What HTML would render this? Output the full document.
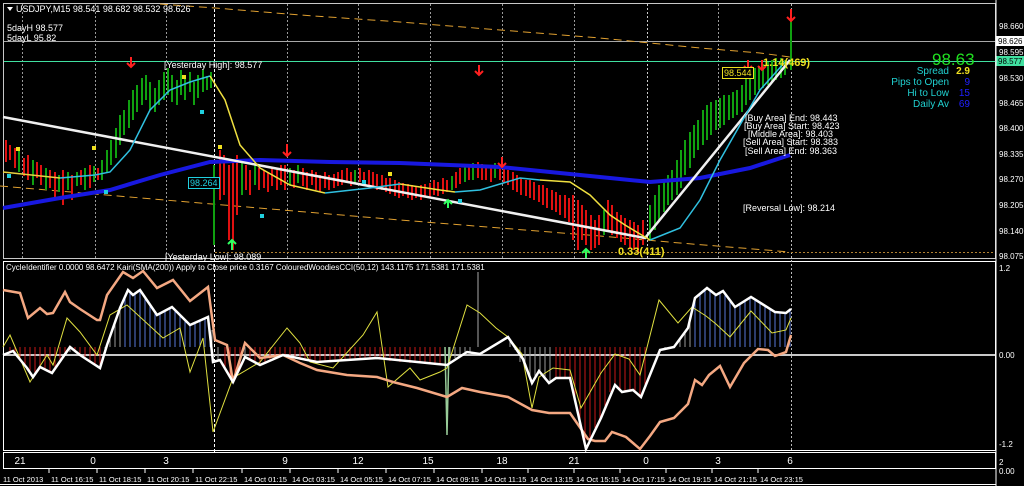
<!DOCTYPE html>
<html><head><meta charset="utf-8"><style>
html,body{margin:0;padding:0;background:#000;width:1024px;height:486px;overflow:hidden}
svg{display:block;font-family:"Liberation Sans",sans-serif}
</style></head><body>
<svg width="1024" height="486" viewBox="0 0 1024 486" xmlns="http://www.w3.org/2000/svg">
<rect width="1024" height="486" fill="#000"/>
<rect x="3.5" y="3.5" width="992" height="255" fill="none" stroke="#c8c8c8"/>
<rect x="3.5" y="261.5" width="992" height="189" fill="none" stroke="#fff"/>
<rect x="3.5" y="452.5" width="992" height="16" fill="none" stroke="#fff"/>
<line x1="0" y1="484.5" x2="996" y2="484.5" stroke="#fff"/>
<g stroke="#9a9a9a" stroke-dasharray="2,2" stroke-width="1">
<line x1="22.5" y1="4" x2="22.5" y2="258"/><line x1="95.5" y1="4" x2="95.5" y2="258"/><line x1="166.5" y1="4" x2="166.5" y2="258"/>
<line x1="287.5" y1="4" x2="287.5" y2="258"/><line x1="358.5" y1="4" x2="358.5" y2="258"/><line x1="430.5" y1="4" x2="430.5" y2="258"/>
<line x1="502.5" y1="4" x2="502.5" y2="258"/><line x1="574.5" y1="4" x2="574.5" y2="258"/><line x1="718.5" y1="4" x2="718.5" y2="258"/>
</g>
<line x1="214.5" y1="4" x2="214.5" y2="452" stroke="#fff" stroke-dasharray="3,2"/>
<line x1="647.5" y1="4" x2="647.5" y2="258" stroke="#ccc" stroke-dasharray="2,2"/>
<line x1="791.5" y1="4" x2="791.5" y2="452" stroke="#bbb" stroke-dasharray="2,2"/>
<line x1="4" y1="41.5" x2="995" y2="41.5" stroke="#a8a8a8"/>
<line x1="4" y1="61.5" x2="1024" y2="61.5" stroke="#40e0a0"/>
<polyline points="160,4 215,8 300,15 400,22 500,30 600,38 700,48 760,53 790,57" fill="none" stroke="#e0a030" stroke-dasharray="8,5"/>
<polyline points="0,186 200,203 400,220 600,236 680,243 790,252" fill="none" stroke="#e0a030" stroke-dasharray="8,5"/>
<line x1="215" y1="252.5" x2="995" y2="252.5" stroke="#b08030" stroke-dasharray="2,2"/>
<!-- candles -->
<path fill="none" stroke="#e01010" stroke-width="2" d="M6,140V162M10,145V160M15,148V168M24,158V176M28,155V180M37,162V178M41,165V185M50,170V188M55,172V200M63,170V205M72,175V200M81,170V185M90,165V188M98,168V180
M220,150V200M224,155V195M229,165V240M233,160V250M237,155V215M246,165V190M250,170V195M259,168V190M264,170V188M268,172V192M272,168V186M277,170V190M281,165V185M285,165V190M294,170V188M303,168V186M307,172V190M312,170V185M316,172V190M320,175V192M325,172V188M329,175V190M334,174V188M338,172V186M342,170V185M347,168V182M351,172V186M360,168V182M364,172V186M369,170V185M373,172V188M377,174V190M382,175V190M386,178V192M390,178V194M395,180V196M399,182V198M403,183V196M408,184V198M412,185V200M416,186V198M421,185V200M425,184V196M430,183V198M434,180V195M438,182V196M443,178V194M447,180V192M456,172V188M460,168V184M469,165V180M478,162V178M482,164V180M486,165V180M491,166V182M500,165V180M504,168V183M508,170V185M513,172V190M517,175V192M521,178V195M526,180V196M530,180V198M534,182V200M539,185V202M543,185V205M547,188V208M552,190V210M556,192V212M560,195V215M565,195V218M569,198V222M573,195V240M578,200V250M582,205V240M586,210V245M591,215V250M595,220V248M599,215V245M608,200V230M612,205V235M617,212V238M621,215V242M625,218V245M630,220V248M634,222V250M638,225V252M643,220V245"/>
<path fill="none" stroke="#10a010" stroke-width="2" d="M19,150V172M33,160V185M46,168V190M59,175V192M68,172V190M77,172V186M85,168V190M94,166V182
M102,160V180M107,150V172M111,140V165M116,128V158M120,115V145M124,110V135M129,100V128M133,90V120M137,85V112M142,78V105M146,75V100M150,82V110M155,88V112M159,80V105M164,72V100M168,68V95M172,75V102M177,80V105M181,70V95M185,78V100M190,72V92M194,82V105M198,75V98M203,70V92M207,76V90M211,72V88M214,165V245
M242,160V195M255,165V185M290,168V185M298,165V183M355,170V183M452,176V190M465,165V182M473,163V180M495,163V178M604,210V235
M650,205V240M655,195V230M659,185V220M664,180V212M668,175V205M672,170V200M677,160V195M681,150V188M685,140V175M690,132V168M694,125V158M698,120V150M703,110V145M707,105V140M711,102V135M716,100V130M720,98V128M724,95V125M729,95V120M733,92V118M737,90V115M742,85V112M746,75V105M750,72V100M755,68V95M759,66V90M763,64V88M768,62V85M772,60V82M776,58V80M781,58V78M785,60V75M791,10V70"/>
<polyline points="3,208 60,198 110,190 160,175 210,162 260,160 330,162 400,163 500,167 560,173 600,177 650,182 700,178 750,168 790,155" fill="none" stroke="#1818e0" stroke-width="4"/>
<polyline points="3,117 645,238 790,60" fill="none" stroke="#f0f0f0" stroke-width="2.5"/>
<polyline points="3,172 60,178" fill="none" stroke="#e8d040" stroke-width="1.5"/>
<polyline points="60,178 95,175 110,172 130,150 150,110 170,90 190,82 210,76" fill="none" stroke="#30c0e0" stroke-width="1.5"/>
<polyline points="210,76 225,100 240,145 260,168 290,185 325,193" fill="none" stroke="#f0e040" stroke-width="1.5"/>
<polyline points="325,193 370,188 400,184" fill="none" stroke="#30c0e0" stroke-width="1.5"/>
<polyline points="400,184 440,190 455,192" fill="none" stroke="#f0e040" stroke-width="1.5"/>
<polyline points="455,192 480,190 520,178 540,180" fill="none" stroke="#30c0e0" stroke-width="1.5"/>
<polyline points="540,180 570,182 590,195 610,215 625,225 650,240" fill="none" stroke="#f0e040" stroke-width="1.5"/>
<polyline points="650,240 680,228 700,200 720,160 760,90 785,62" fill="none" stroke="#30c0e0" stroke-width="1.5"/>
<g fill="#f0e020"><rect x="16" y="147" width="4" height="4"/><rect x="92" y="146" width="4" height="4"/><rect x="182" y="75" width="4" height="4"/><rect x="218" y="145" width="4" height="4"/><rect x="388" y="172" width="4" height="4"/></g>
<g fill="#20d0e0"><rect x="7" y="174" width="4" height="4"/><rect x="200" y="110" width="4" height="4"/><rect x="260" y="214" width="4" height="4"/><rect x="362" y="180" width="4" height="4"/><rect x="458" y="199" width="4" height="4"/><rect x="104" y="190" width="4" height="4"/></g>
<g fill="none" stroke="#ff2020" stroke-width="2">
<path d="M131,57v9M127,63l4,4l4,-4"/><path d="M479,65v9M475,71l4,4l4,-4"/><path d="M287,144v12M283,152l4,4l4,-4"/><path d="M502,157v10M498,163l4,4l4,-4"/><path d="M748,60v9M744,66l4,4l4,-4"/><path d="M762,60v9M758,66l4,4l4,-4"/><path d="M791,9v12M787,17l4,4l4,-4"/>
</g>
<g fill="none" stroke="#30ff60" stroke-width="2">
<path d="M232,250v-10M228,244l4,-4l4,4"/><path d="M586,258v-9M582,253l4,-4l4,4"/><path d="M448,208v-8M444,204l4,-4l4,4"/>
</g>
<g font-size="9" fill="#fff">
<path d="M7,7 L13,7 L10,11Z" fill="#fff"/>
<text x="16" y="12">USDJPY,M15  98.541 98.682 98.532 98.626</text>
<text x="7" y="31">5dayH 98.577</text>
<text x="7" y="41">5dayL 95.82</text>
<text x="164" y="68">[Yesterday High]: 98.577</text>
<text x="165" y="260">[Yesterday Low]: 98.089</text>
<text x="745" y="121">[Buy Area] End: 98.443</text>
<text x="744" y="129">[Buy Area] Start: 98.423</text>
<text x="748" y="137">[Middle Area]: 98.403</text>
<text x="743" y="145">[Sell Area] Start: 98.383</text>
<text x="745" y="154">[Sell Area] End: 98.363</text>
<text x="743" y="211">[Reversal Low]: 98.214</text>
</g>
<rect x="188.5" y="177.5" width="31" height="11" fill="#000" stroke="#20d0e0"/>
<text x="190" y="186" font-size="9" fill="#20d0e0">98.264</text>
<rect x="722.5" y="67.5" width="31" height="11" fill="#000" stroke="#f0e020"/>
<text x="724" y="76" font-size="9" fill="#f0e020">98.544</text>
<text x="763" y="66" font-size="11" font-weight="bold" fill="#f0e020">1.14(469)</text>
<text x="618" y="255" font-size="11" font-weight="bold" fill="#f0e020">0.33(411)</text>
<text x="932" y="65" font-size="17" fill="#20e020">98.63</text>
<g font-size="10" text-anchor="end">
<text x="949" y="74" fill="#20d0d0">Spread</text><text x="970" y="74" fill="#f0e020" font-weight="bold">2.9</text>
<text x="949" y="85" fill="#20d0d0">Pips to Open</text><text x="970" y="85" fill="#2020ff">9</text>
<text x="949" y="96" fill="#20d0d0">Hi to Low</text><text x="970" y="96" fill="#2020ff">15</text>
<text x="949" y="107" fill="#20d0d0">Daily Av</text><text x="970" y="107" fill="#2020ff">69</text>
</g>
<g font-size="8" fill="#fff">
<text x="999" y="29">98.660</text><text x="999" y="55">98.595</text><text x="999" y="81">98.530</text><text x="999" y="106">98.465</text><text x="999" y="131">98.400</text><text x="999" y="157">98.335</text><text x="999" y="182">98.270</text><text x="999" y="208">98.205</text><text x="999" y="234">98.140</text><text x="999" y="259">98.075</text>
<text x="999" y="271">1.2</text><text x="999" y="358">0.00</text><text x="999" y="447">-1.2</text>
<text x="999" y="465">2</text><text x="999" y="474">0.00</text>
</g>
<rect x="996" y="36" width="28" height="10" fill="#fff"/><text x="998" y="44" font-size="8" fill="#000">98.626</text>
<rect x="996" y="56" width="28" height="10" fill="#40e0a0"/><text x="998" y="64" font-size="8" fill="#000">98.577</text>
<line x1="996" y1="0" x2="996" y2="486" stroke="#fff"/>
<!-- indicator -->
<text x="6" y="270" font-size="8" fill="#fff">CycleIdentifier 0.0000 98.6472  Kairi(SMA(200)) Apply to Close price 0.3167  ColouredWoodiesCCI(50,12) 143.1175 171.5381 171.5381</text>
<line x1="4" y1="355" x2="995" y2="355" stroke="#c8c8c8" stroke-width="2"/>
<path fill="none" stroke="#c81818" stroke-width="1" d="M10,347V352M15,347V354M20,347V360M25,347V366M30,347V372M35,347V374M40,347V367M45,347V370M50,347V372M55,347V369M60,347V362M65,347V354M75,347V351M80,347V355M85,347V358M90,347V362M95,347V365M100,347V368
M225,347V367M230,347V378M235,347V378M240,347V367M250,347V360M255,347V363M260,347V365M265,347V362M270,347V360M275,347V358M280,347V357M285,347V356M290,347V358M295,347V359M300,347V360M305,347V361M310,347V362M315,347V362M320,347V362M325,347V361M330,347V361M335,347V361M340,347V360M345,347V360M350,347V360M355,347V359M360,347V359M365,347V359M370,347V358M375,347V358M380,347V359M385,347V360M390,347V361M395,347V361M400,347V362M405,347V362M410,347V363M415,347V363M420,347V363M425,347V364M430,347V364M435,347V364M440,347V365M445,347V365
M556,347V378M560,347V378M565,347V378M570,347V378M575,347V400M580,347V425M585,347V447M590,347V439M595,347V428M600,347V418M605,347V407M610,347V392M615,347V385M620,347V391M625,347V391M630,347V390M635,347V393M640,347V397M645,347V385"/>
<path fill="none" stroke="#9a9a9a" stroke-width="1" d="M70,347V352M105,347V350M110,347V337M115,347V322M120,347V308M212,347V330M218,347V360M245,347V357M450,347V362M455,347V358M460,347V354M465,347V352M470,347V352M520,347V362M525,347V362M530,347V378M535,347V378M540,347V373M545,347V380M550,347V382M510,347V340M515,347V350M665,347V349M670,347V348M675,347V346M680,347V340M685,347V333M690,347V320"/>
<path fill="none" stroke="#5878d8" stroke-width="1" d="M125,347V297M130,347V292M135,347V294M140,347V290M145,347V297M150,347V305M155,347V313M160,347V313M165,347V311M170,347V308M175,347V310M180,347V315M185,347V320M190,347V325M195,347V323M200,347V320M205,347V318M210,347V330
M695,347V298M700,347V294M705,347V289M710,347V290M715,347V294M720,347V293M725,347V292M730,347V300M735,347V307M740,347V304M745,347V300M750,347V297M755,347V300M760,347V304M765,347V307M770,347V310M775,347V312M780,347V312M785,347V313M790,347V309"/>
<line x1="478" y1="272" x2="478" y2="347" stroke="#aaa"/>
<polyline points="445,347 447,435 449,347" fill="none" stroke="#9c9" stroke-width="1.5"/>
<polyline points="3,347 10,335 30,382 47,355 53,365 67,318 80,332 97,355 110,315 127,305 163,338 180,328 190,372 203,338 213,432 233,378 260,362 287,328 300,343 310,362 333,368 363,335 377,312 388,387 410,368 420,380 440,372 447,368 467,305 480,313 496,328 508,337 522,354 532,408 539,377 553,368 570,370 581,408 601,373 615,354 629,359 640,375 659,300 678,323 692,307 706,316 716,324 730,337 751,311 772,333 786,330 791,318" fill="none" stroke="#e0e040" stroke-width="1"/>
<polyline points="3,290 20,293 28,318 40,308 47,314 53,313 65,292 70,302 80,309 97,320 100,320 107,295 123,272 133,278 143,271 157,288 173,280 190,301 208,287 215,340 227,345 233,382 245,343 260,358 283,355 300,363 317,370 347,375 377,377 393,382 417,388 447,397 462,388 480,392 508,397 532,410 549,413 570,413 588,439 595,441 605,441 612,432 626,437 640,449 650,436 660,422 674,418 688,404 695,380 702,385 709,375 720,366 730,387 744,363 758,349 768,350 775,356 786,352 791,335" fill="none" stroke="#f4a882" stroke-width="2.5"/>
<polyline points="3,355 13,351 27,368 33,377 40,367 52,373 70,347 80,355 100,368 107,345 120,308 128,290 133,295 140,290 157,315 172,307 190,325 208,317 213,362 220,360 233,382 245,357 260,365 283,355 317,362 377,358 447,365 467,352 480,354 508,337 523,359 532,383 539,371 549,383 556,378 570,378 586,449 601,418 615,385 622,392 633,390 641,397 660,350 674,347 688,328 695,298 707,288 716,295 723,291 735,307 751,297 775,312 786,313 791,309" fill="none" stroke="#fff" stroke-width="2.5"/>
<g font-size="10" fill="#fff" text-anchor="middle">
<text x="20" y="464">21</text><text x="93" y="464">0</text><text x="166" y="464">3</text><text x="285" y="464">9</text><text x="358" y="464">12</text><text x="428" y="464">15</text><text x="502" y="464">18</text><text x="574" y="464">21</text><text x="646" y="464">0</text><text x="718" y="464">3</text><text x="790" y="464">6</text>
</g>
<g font-size="7.5" fill="#fff">
<text x="3" y="482">11 Oct 2013</text><text x="51" y="482">11 Oct 16:15</text><text x="99" y="482">11 Oct 18:15</text><text x="147" y="482">11 Oct 20:15</text><text x="195" y="482">11 Oct 22:15</text><text x="244" y="482">14 Oct 01:15</text><text x="292" y="482">14 Oct 03:15</text><text x="340" y="482">14 Oct 05:15</text><text x="388" y="482">14 Oct 07:15</text><text x="436" y="482">14 Oct 09:15</text><text x="484" y="482">14 Oct 11:15</text><text x="530" y="482">14 Oct 13:15</text><text x="576" y="482">14 Oct 15:15</text><text x="622" y="482">14 Oct 17:15</text><text x="668" y="482">14 Oct 19:15</text><text x="714" y="482">14 Oct 21:15</text><text x="760" y="482">14 Oct 23:15</text>
</g>
<path stroke="#fff" d="M49,469v4M97,469v4M145,469v4M193,469v4M242,469v4M290,469v4M338,469v4M386,469v4M434,469v4M482,469v4M528,469v4M574,469v4M620,469v4M666,469v4M712,469v4M758,469v4"/>
</svg>
</body></html>
